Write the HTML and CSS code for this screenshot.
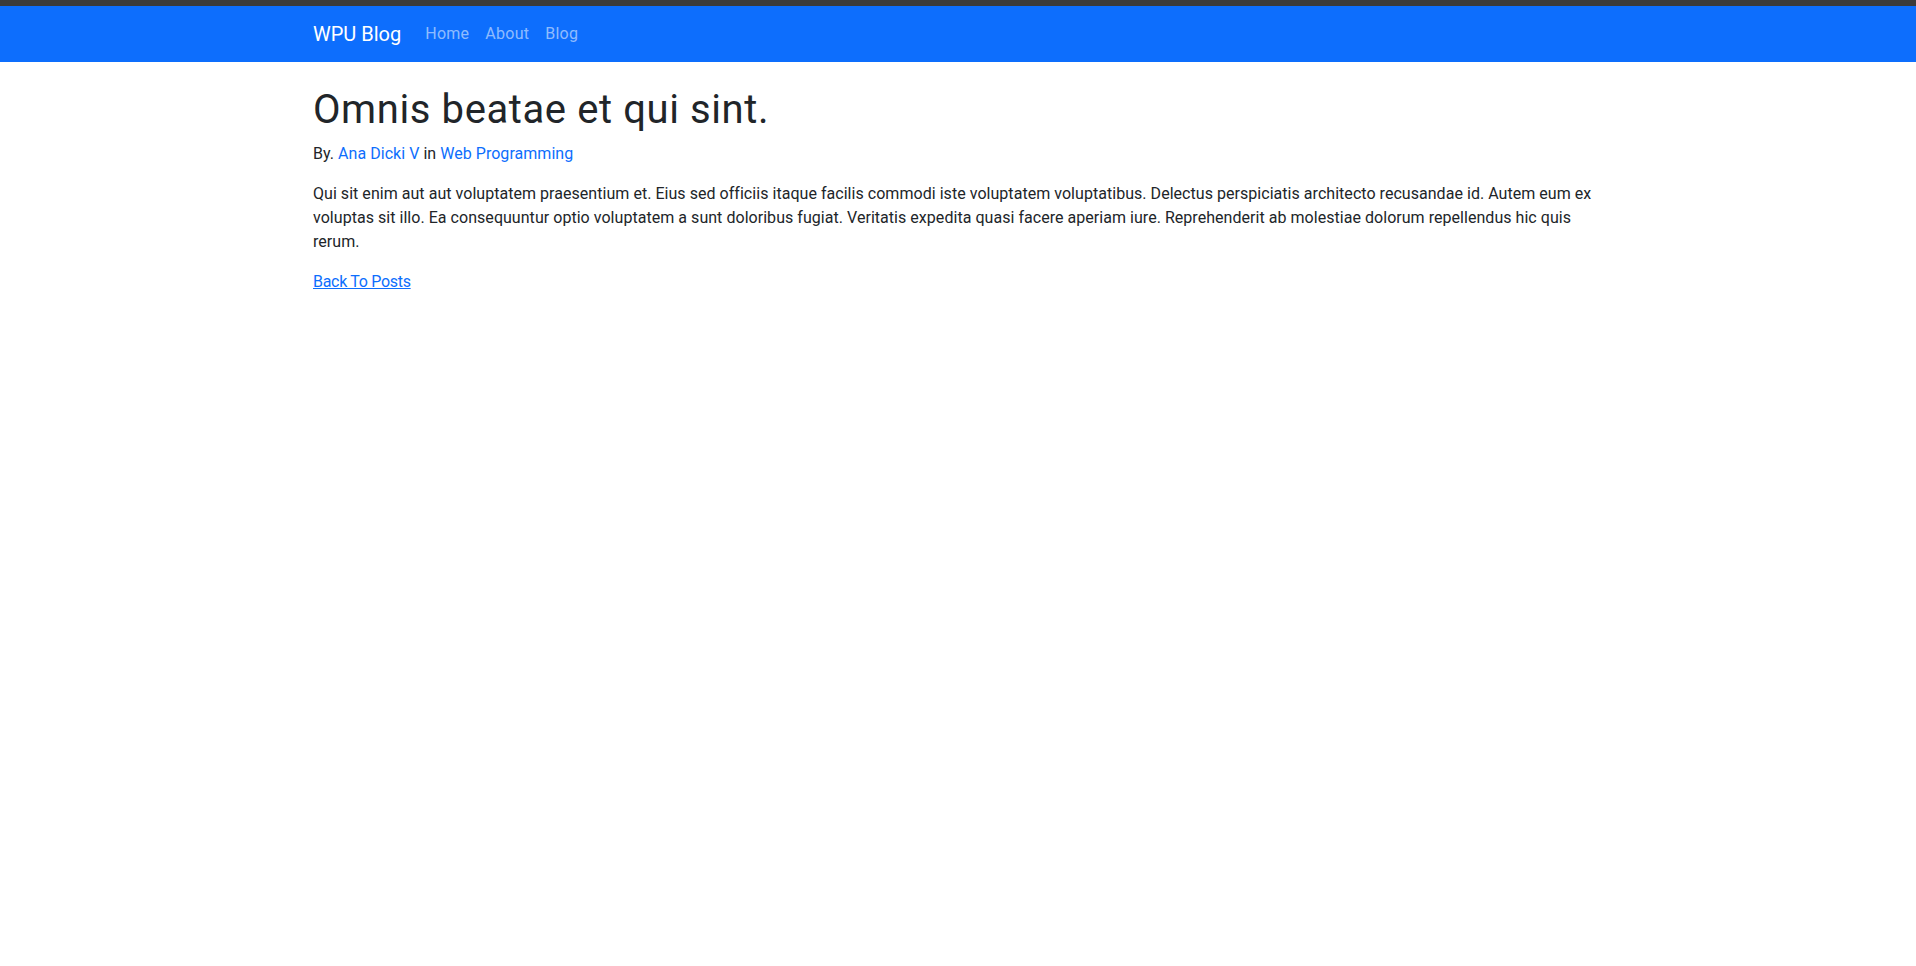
FILE: index.html
```html
<!DOCTYPE html>
<html lang="en">
<head>
<meta charset="utf-8">
<title>WPU Blog | Post</title>
<link rel="stylesheet" href="styles.css">
</head>
<body>
<div class="topbar"></div>
<nav class="navbar">
  <div class="container nav-inner">
    <a class="brand" href="#">WPU Blog</a>
    <ul class="nav-list">
      <li><a class="nav-link" href="#">Home</a></li>
      <li><a class="nav-link" href="#">About</a></li>
      <li><a class="nav-link" href="#">Blog</a></li>
    </ul>
  </div>
</nav>
<main class="container content">
  <h1 class="title">Omnis beatae et qui sint.</h1>
  <p class="meta">By. <a class="plain-link" href="#">Ana Dicki V</a> in <a class="plain-link" href="#">Web Programming</a></p>
  <p class="body-text">Qui sit enim aut aut voluptatem praesentium et. Eius sed officiis itaque facilis commodi iste voluptatem voluptatibus. Delectus perspiciatis architecto recusandae id. Autem eum ex voluptas sit illo. Ea consequuntur optio voluptatem a sunt doloribus fugiat. Veritatis expedita quasi facere aperiam iure. Reprehenderit ab molestiae dolorum repellendus hic quis rerum.</p>
  <a class="back-link" href="#">Back To Posts</a>
</main>
</body>
</html>
```
FILE: styles.css
```css
* { box-sizing: border-box; }
html, body { margin: 0; padding: 0; }
body {
  font-family: Roboto, "Liberation Sans", sans-serif;
  font-size: 16px;
  line-height: 1.5;
  color: #212529;
  background: #fff;
  letter-spacing: 0.04px;
}
.topbar { height: 6px; background: #3b3b3b; }
.container {
  width: 100%;
  max-width: 1320px;
  margin: 0 auto;
  padding: 0 9px 0 15px;
}
.navbar {
  background: #0d6efd;
  padding: 8px 0;
}
.nav-inner { display: flex; align-items: center; }
.brand {
  color: #fff;
  text-decoration: none;
  font-size: 20px;
  line-height: 30px;
  padding: 5px 0;
  margin-right: 16px;
  letter-spacing: 0;
}
.nav-list {
  display: flex;
  list-style: none;
  margin: 0;
  padding: 0;
}
.nav-link {
  display: block;
  padding: 8px;
  color: rgba(255, 255, 255, 0.55);
  text-decoration: none;
  line-height: 24px;
  letter-spacing: 0.25px;
}
.content { padding-top: 24px; }
.title {
  font-size: 40px;
  font-weight: 400;
  line-height: 1.2;
  margin: 0 0 8px;
  letter-spacing: 0.6px;
}
.meta { margin: 0 0 16px; }
.body-text { margin: 0 0 16px; }
.plain-link { color: #0d6efd; text-decoration: none; }
.back-link { color: #0d6efd; text-decoration: underline; letter-spacing: -0.3px; }
```
